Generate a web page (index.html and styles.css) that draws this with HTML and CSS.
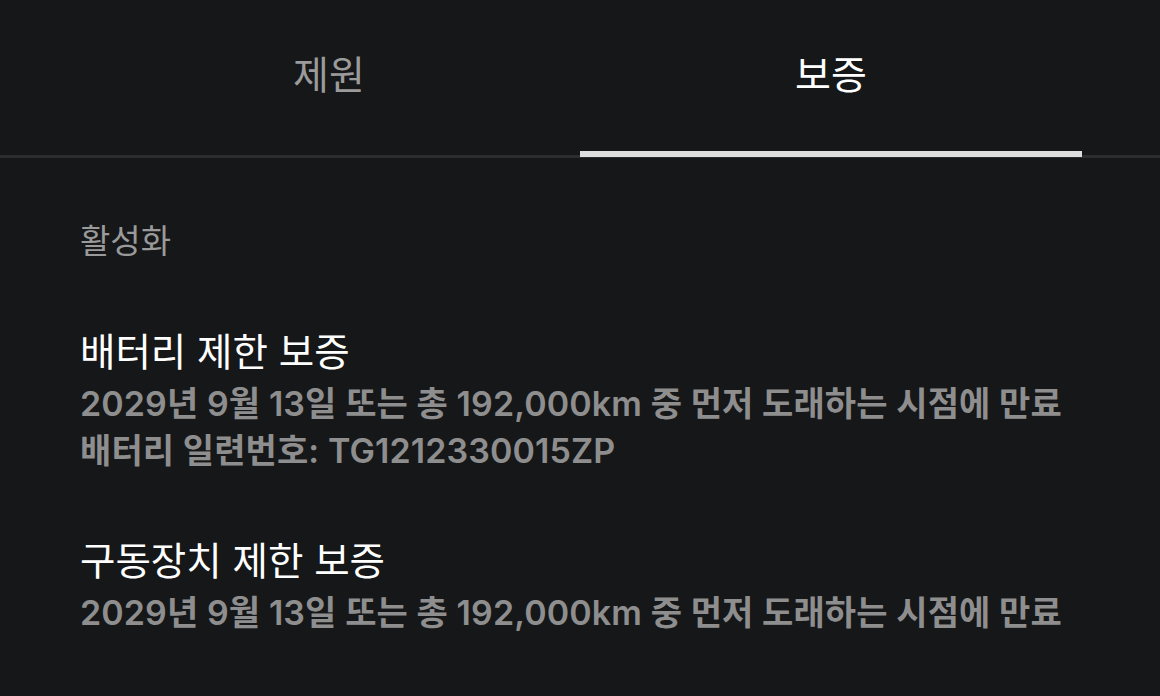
FILE: index.html
```html
<!DOCTYPE html>
<html lang="ko">
<head>
<meta charset="utf-8">
<link rel="stylesheet" href="styles.css">
</head>
<body>
<div class="tabs">
  <div class="tab">제원</div>
  <div class="tab active">보증</div>
</div>
<main class="content">
  <div class="label">활성화</div>
  <section class="item">
    <div class="title">배터리 제한 보증</div>
    <div class="sub">2029년 9월 13일 또는 총 192,000km 중 먼저 도래하는 시점에 만료</div>
    <div class="sub">배터리 일련번호: TG1212330015ZP</div>
  </section>
  <section class="item">
    <div class="title">구동장치 제한 보증</div>
    <div class="sub">2029년 9월 13일 또는 총 192,000km 중 먼저 도래하는 시점에 만료</div>
  </section>
</main>
</body>
</html>
```
FILE: styles.css
```css
html, body {
  margin: 0;
  padding: 0;
  background: #161719;
  font-family: "Inter", "Noto Sans CJK KR", sans-serif;
  height: 696px;
  overflow: hidden;
}
.tabs {
  display: flex;
  padding: 0 78px;
  height: 155px;
  border-bottom: 3px solid #2c2d2f;
}
.tab {
  flex: 1;
  box-sizing: border-box;
  height: 157px;
  margin-bottom: -2px;
  border-bottom: 6px solid transparent;
  display: flex;
  align-items: center;
  justify-content: center;
  padding-bottom: 8px;
  font-size: 39px;
  color: #9b9b9b;
}
.tab.active {
  color: #ffffff;
  border-bottom-color: #dedede;
}
.content {
  padding: 63px 80px 0;
}
.label {
  font-size: 33px;
  line-height: 40px;
  color: #9a9a9a;
  margin-bottom: 67px;
}
.item {
  margin-bottom: 63px;
}
.title {
  font-size: 38.5px;
  line-height: 48px;
  font-weight: 400;
  color: #ffffff;
  margin-bottom: 4px;
}
.sub {
  font-size: 34px;
  line-height: 47px;
  font-weight: 600;
  letter-spacing: 0.1px;
  color: #8e8e8e;
  white-space: nowrap;
}
```
